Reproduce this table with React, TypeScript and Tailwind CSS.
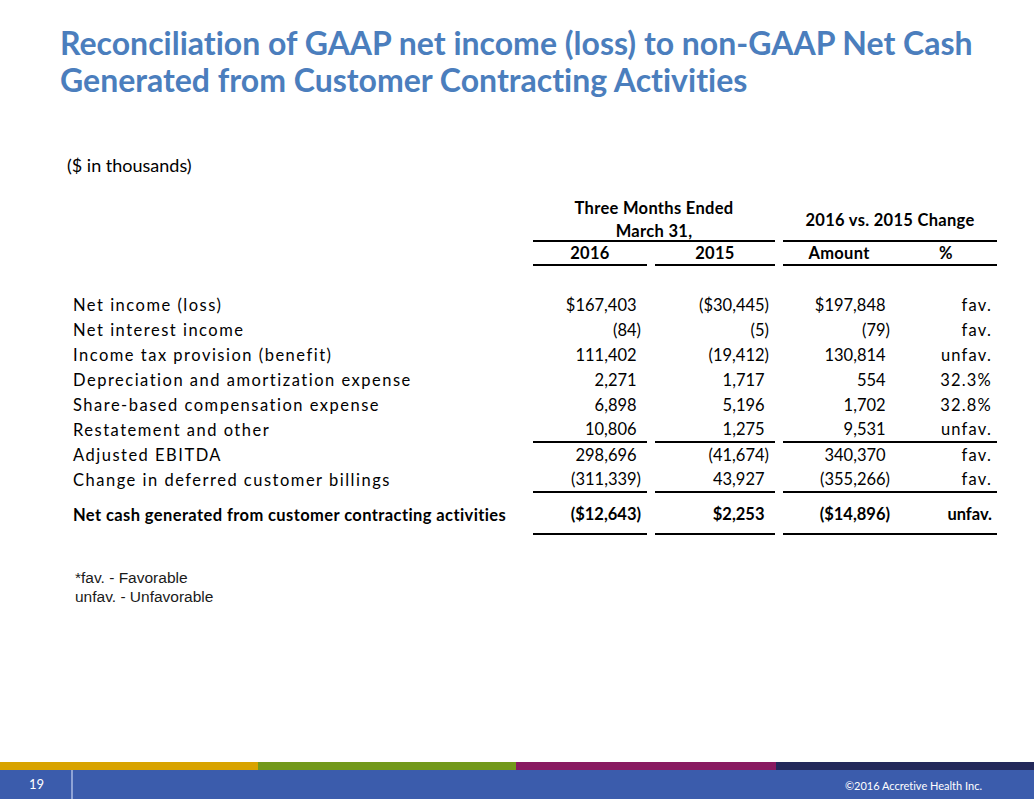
import React from 'react';

type Row = {
    label: string;
    cur: string;
    prior: string;
    amount: string;
    pct: string;
    rule?: boolean;
};

const rows: Row[] = [
    { label: 'Net income (loss)', cur: '$167,403', prior: '($30,445)', amount: '$197,848', pct: 'fav.' },
    { label: 'Net interest income', cur: '(84)', prior: '(5)', amount: '(79)', pct: 'fav.' },
    { label: 'Income tax provision (benefit)', cur: '111,402', prior: '(19,412)', amount: '130,814', pct: 'unfav.' },
    { label: 'Depreciation and amortization expense', cur: '2,271', prior: '1,717', amount: '554', pct: '32.3%' },
    { label: 'Share-based compensation expense', cur: '6,898', prior: '5,196', amount: '1,702', pct: '32.8%' },
    { label: 'Restatement and other', cur: '10,806', prior: '1,275', amount: '9,531', pct: 'unfav.', rule: true },
    { label: 'Adjusted EBITDA', cur: '298,696', prior: '(41,674)', amount: '340,370', pct: 'fav.' },
    { label: 'Change in deferred customer billings', cur: '(311,339)', prior: '43,927', amount: '(355,266)', pct: 'fav.', rule: true },
];

// accounting style: positives leave room for the closing paren
const Num: React.FC<{ v: string }> = ({ v }) => (
    <span>
        {v}
        {!v.endsWith(')') && <span className="invisible">)</span>}
    </span>
);

const App: React.FC = () => {
    return (
        <div
            className="w-[1034px] h-[799px] bg-white flex flex-col text-black [font-variant-ligatures:none]"
            style={{ fontFamily: 'Lato, "Noto Sans", sans-serif' }}
        >
            <h1 className="mt-[24px] ml-[60px] text-[32px] leading-[37px] font-bold text-[#4b7ebd]">
                Reconciliation of GAAP net income (loss) to non-GAAP Net Cash
                <br />
                Generated from Customer Contracting Activities
            </h1>

            <p className="mt-[55px] ml-[67px] text-[18px] leading-[24px]">($ in thousands)</p>

            <div className="mt-[19px] ml-[73px] text-[16.5px]">
                {/* header row 1 */}
                <div className="flex font-bold tracking-[0.3px]">
                    <div className="w-[460px]" />
                    <div className="w-[242px] h-[46px] border-b-2 border-black flex flex-col items-center leading-[23px] pt-[0.5px]">
                        <span>Three Months Ended</span>
                        <span>March 31,</span>
                    </div>
                    <div className="w-[8px]" />
                    <div className="w-[214px] h-[46px] border-b-2 border-black flex items-center justify-center pt-[4px]">
                        2016 vs. 2015 Change
                    </div>
                </div>
                {/* header row 2 */}
                <div className="flex font-bold leading-[22px] tracking-[0.3px]">
                    <div className="w-[460px]" />
                    <div className="w-[114px] h-[24px] border-b-2 border-black text-center">2016</div>
                    <div className="w-[8px]" />
                    <div className="w-[120px] h-[24px] border-b-2 border-black text-center">2015</div>
                    <div className="w-[8px]" />
                    <div className="w-[214px] h-[24px] border-b-2 border-black flex">
                        <div className="w-[112px] text-center">Amount</div>
                        <div className="w-[102px] text-center">%</div>
                    </div>
                </div>

                <div className="mt-[26.5px]">
                    {rows.map((r, i) => {
                        const line = r.rule ? 'border-b-2 border-black' : '';
                        return (
                            <div key={i} className="flex h-[25px] items-center">
                                <div className="w-[460px] tracking-[1.5px]">{r.label}</div>
                                <div className={`w-[114px] h-full flex items-center justify-end pr-[6px] ${line}`}>
                                    <Num v={r.cur} />
                                </div>
                                <div className="w-[8px]" />
                                <div className={`w-[120px] h-full flex items-center justify-end pr-[6px] ${line}`}>
                                    <Num v={r.prior} />
                                </div>
                                <div className="w-[8px]" />
                                <div className={`w-[214px] h-full flex ${line}`}>
                                    <div className="w-[112px] flex items-center justify-end pr-[5px]">
                                        <Num v={r.amount} />
                                    </div>
                                    <div className="w-[102px] flex items-center justify-end pr-[5px] tracking-[1.2px]">{r.pct}</div>
                                </div>
                            </div>
                        );
                    })}
                    <div className="flex h-[42px] font-bold">
                        <div className="w-[460px] pt-[4px] flex items-center tracking-[0.4px]">
                            Net cash generated from customer contracting activities
                        </div>
                        <div className="w-[114px] pt-[4px] border-b-2 border-black flex items-center justify-end pr-[6px]">
                            <Num v="($12,643)" />
                        </div>
                        <div className="w-[8px]" />
                        <div className="w-[120px] pt-[4px] border-b-2 border-black flex items-center justify-end pr-[6px]">
                            <Num v="$2,253" />
                        </div>
                        <div className="w-[8px]" />
                        <div className="w-[214px] pt-[4px] border-b-2 border-black flex">
                            <div className="w-[112px] flex items-center justify-end pr-[5px]">
                                <Num v="($14,896)" />
                            </div>
                            <div className="w-[102px] flex items-center justify-end pr-[5px]">unfav.</div>
                        </div>
                    </div>
                </div>
            </div>

            <div
                className="mt-[33px] ml-[75px] text-[15.5px] leading-[19px] text-[#1a1a1a]"
                style={{ fontFamily: '"Liberation Sans", Arial, sans-serif' }}
            >
                <p>*fav. - Favorable</p>
                <p>unfav. - Unfavorable</p>
            </div>

            <div className="mt-auto">
                <div className="flex h-[8px]">
                    <div className="w-[258px] bg-[#d8a300]" />
                    <div className="w-[258px] bg-[#72991b]" />
                    <div className="w-[260px] bg-[#891a61]" />
                    <div className="flex-1 bg-[#23295b]" />
                </div>
                <div className="h-[29px] bg-[#3b5cac] flex items-center text-white">
                    <div className="w-[73px] h-full flex items-center pl-[29px] border-r-2 border-[#8ea3d6] text-[13px]">19</div>
                    <div className="flex-1 text-right pr-[52px] pt-[4px] text-[11px]">©2016 Accretive Health Inc.</div>
                </div>
            </div>
        </div>
    );
};

export default App;
